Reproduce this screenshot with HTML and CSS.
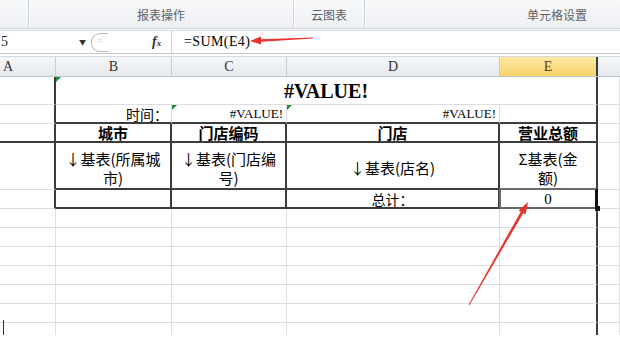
FILE: index.html
```html
<!DOCTYPE html>
<html lang="zh-CN">
<head>
    <meta charset="UTF-8">
    <title>报表</title>
    <link rel="stylesheet" href="styles.css">
</head>
<body>
    <div class="app">
        <div class="ribbon">
            <div class="group g0"></div>
            <div class="group g1">报表操作</div>
            <div class="group g2">云图表</div>
            <div class="group g3">单元格设置</div>
        </div>

        <div class="formula-bar">
            <div class="name-box">5</div>
            <div class="name-drop">▼</div>
            <div class="fx-btns"><span class="round">=</span></div>
            <div class="fx">f<span>x</span></div>
            <div class="formula">=SUM(E4)</div>
        </div>

        <div class="col-heads">
            <div class="ch cha">A</div>
            <div class="ch chb">B</div>
            <div class="ch chc">C</div>
            <div class="ch chd">D</div>
            <div class="ch che">E</div>
            <div class="ch chf"></div>
        </div>

        <div class="sheet">
            <!-- row 1 -->
            <div class="c br"></div>
            <div class="c br title span4"><span class="tri"></span>#VALUE!</div>
            <div class="c"></div>
            <!-- row 2 -->
            <div class="c br"></div>
            <div class="c bb right cjk">时间：</div>
            <div class="c bb right mono"><span class="tri"></span>#VALUE!</div>
            <div class="c bb right mono"><span class="tri"></span>#VALUE!</div>
            <div class="c br bb"></div>
            <div class="c"></div>
            <!-- row 3 -->
            <div class="c br bb"></div>
            <div class="c br bb head">城市</div>
            <div class="c br bb head">门店编码</div>
            <div class="c br bb head">门店</div>
            <div class="c br bb head">营业总额</div>
            <div class="c"></div>
            <!-- row 4 -->
            <div class="c br"></div>
            <div class="c br bb field">↓基表(所属城<br>市)</div>
            <div class="c br bb field">↓基表(门店编<br>号)</div>
            <div class="c br bb field">↓基表(店名)</div>
            <div class="c br bb field">Σ基表(金<br>额)</div>
            <div class="c"></div>
            <!-- row 5 -->
            <div class="c br"></div>
            <div class="c br bb"></div>
            <div class="c br bb"></div>
            <div class="c br bb cjk center">总计：</div>
            <div class="c br bb num center sel">0</div>
            <div class="c"></div>
            <!-- empty rows -->
            <div class="c"></div><div class="c"></div><div class="c"></div><div class="c"></div><div class="c br"></div><div class="c"></div>
            <div class="c"></div><div class="c"></div><div class="c"></div><div class="c"></div><div class="c br"></div><div class="c"></div>
            <div class="c"></div><div class="c"></div><div class="c"></div><div class="c"></div><div class="c br"></div><div class="c"></div>
            <div class="c"></div><div class="c"></div><div class="c"></div><div class="c"></div><div class="c br"></div><div class="c"></div>
            <div class="c"></div><div class="c"></div><div class="c"></div><div class="c"></div><div class="c br"></div><div class="c"></div>
            <div class="c"></div><div class="c"></div><div class="c"></div><div class="c"></div><div class="c br"></div><div class="c"></div>
            <div class="c last"><span class="caret"></span></div><div class="c last"></div><div class="c last"></div><div class="c last"></div><div class="c last br"></div><div class="c last"></div>
        </div>

        <svg class="arrows" width="620" height="341" viewBox="0 0 620 341">
            <polygon points="250,41 261,36.5 261,39.2 313,37.4 313,38.6 261,41.8 261,44.5" fill="#e8322c"/>
            <polygon points="528,202 525.5,214.4 523.3,213.1 469.4,305.2 468.6,304.8 520.7,211.7 518.6,210.4" fill="#e8322c"/>
        </svg>
    </div>
</body>
</html>
```

FILE: styles.css
```css
body {
    margin: 0;
    background: #fff;
}
.app {
    position: relative;
    width: 620px;
    height: 341px;
    overflow: hidden;
    background: #fff;
    font-family: "Noto Sans CJK SC", sans-serif;
}

/* ribbon group labels */
.ribbon {
    display: flex;
    height: 28px;
    border-bottom: 1px solid #cdd2d9;
    background: linear-gradient(#f8f9fb, #eef0f3);
}
.group {
    flex: 0 0 auto;
    display: flex;
    align-items: center;
    justify-content: center;
    font-size: 12px;
    color: #5e6166;
    border-right: 1px solid #d3d7dd;
    box-shadow: 1px 0 0 #fff;
}
.g0 { width: 28px; }
.g1 { width: 264px; }
.g2 { width: 70px; }
.g3 { width: 384px; border-right: none; }

/* formula bar */
.formula-bar {
    display: flex;
    align-items: center;
    height: 22px;
    margin-top: 1px;
    border-top: 1px solid #d5d9de;
    border-bottom: 1px solid #c3c8ce;
    background: #fff;
}
.name-box {
    width: 78px;
    padding-left: 1px;
    font-family: "Liberation Serif", serif;
    font-size: 14px;
    color: #222;
}
.name-drop {
    width: 10px;
    font-size: 7px;
    color: #333;
}
.fx-btns {
    width: 61px;
    padding-left: 2px;
}
.round {
    display: block;
    width: 16px;
    height: 17px;
    border: 1px solid #b4b8be;
    border-right: none;
    border-radius: 9px 0 0 9px;
    font-size: 9px;
    line-height: 13px;
    color: #c2c5c9;
    text-align: center;
}
.fx {
    width: 19px;
    height: 22px;
    line-height: 22px;
    font-family: "Liberation Serif", serif;
    font-style: italic;
    font-weight: bold;
    font-size: 14px;
    color: #333;
    border-right: 1px solid #c9cdd3;
}
.fx span {
    font-size: 9px;
}
.formula {
    padding-left: 12px;
    font-family: "Liberation Serif", serif;
    font-size: 14px;
    letter-spacing: 0.4px;
    color: #000;
}

/* column headers */
.col-heads {
    display: flex;
    height: 19px;
    margin-top: 2px;
    border-top: 1px solid #d5d9de;
    border-bottom: 1px solid #c0c6ce;
    background: linear-gradient(#f6f7f9, #e6e9ed);
}
.ch {
    box-sizing: border-box;
    flex: 0 0 auto;
    display: flex;
    align-items: center;
    justify-content: center;
    font-family: "Liberation Serif", serif;
    font-size: 14px;
    color: #333;
    border-right: 1px solid #c6ccd3;
}
.cha { width: 56px; justify-content: flex-start; padding-left: 3px; }
.chb { width: 116px; }
.chc { width: 115px; }
.chd { width: 213px; }
.che {
    width: 98px;
    color: #5a4210;
    background: linear-gradient(#fde9a3, #f8d36b);
    border-right: 2px solid #3c3c3c;
}
.chf { width: 22px; border-right: none; }

/* sheet grid */
.sheet {
    display: grid;
    grid-template-columns: 56px 116px 115px 213px 98px 22px;
    grid-template-rows: 28px 19px 19px 47px 19px repeat(6, 19px) 12px;
}
.c {
    position: relative;
    box-sizing: border-box;
    display: flex;
    align-items: center;
    border-right: 1px solid #dcdee1;
    border-bottom: 1px solid #dcdee1;
    color: #000;
    font-size: 14px;
    line-height: 18px;
}
.br { border-right: 2px solid #3c3c3c; }
.bb { border-bottom: 2px solid #3c3c3c; }
.last { border-bottom: none; }
.span4 { grid-column: span 4; }

.title {
    justify-content: center;
    font-family: "Liberation Serif", serif;
    font-weight: bold;
    font-size: 20px;
}
.right {
    justify-content: flex-end;
    padding-right: 3px;
}
.center { justify-content: center; }
.mono {
    font-family: "Liberation Serif", serif;
    font-size: 13px;
}
.num {
    font-family: "Liberation Serif", serif;
    font-size: 15px;
}
.cjk { font-size: 14px; }
.head {
    justify-content: center;
    font-weight: bold;
    font-size: 15px;
}
.field {
    justify-content: center;
    text-align: center;
    padding-top: 4px;
    font-size: 15px;
    line-height: 19px;
}

/* error marker */
.tri {
    position: absolute;
    top: 0;
    left: 0;
    width: 0;
    height: 0;
    border-top: 5px solid #1e8c3c;
    border-right: 5px solid transparent;
}

/* active cell */
.sel::after {
    content: "";
    position: absolute;
    top: -2px;
    left: -1px;
    right: -2px;
    bottom: -2px;
    border: 2px solid #6a6a6a;
    border-right: 3px solid #111;
}
.sel::before {
    content: "";
    position: absolute;
    right: -4px;
    bottom: -4px;
    width: 5px;
    height: 5px;
    background: #111;
    z-index: 1;
}

.caret {
    position: absolute;
    left: 3px;
    top: -3px;
    width: 1px;
    height: 15px;
    background: #333;
}

.arrows {
    position: absolute;
    top: 0;
    left: 0;
    pointer-events: none;
}
```
